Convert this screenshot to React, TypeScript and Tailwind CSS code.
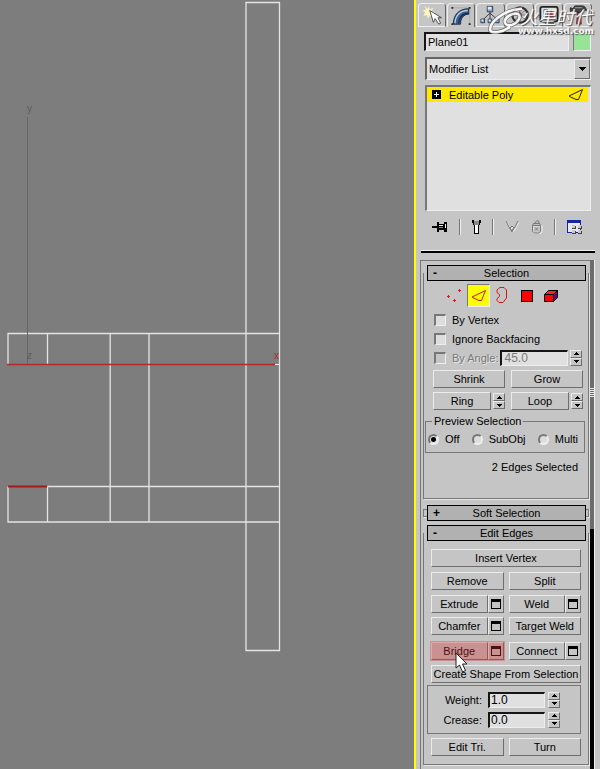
import React from "react";
import clsx from "clsx";

const raised =
  "border border-t-[#ececec] border-l-[#ececec] border-r-[#6e6e6e] border-b-[#6e6e6e] bg-[#c5c5c5]";
const sunken =
  "border-t-2 border-l-2 border-r border-b border-t-[#161616] border-l-[#161616] border-r-[#eeeeee] border-b-[#eeeeee] bg-[#e0e0e0]";
const etched = "border border-[#777777] shadow-[1px_1px_0_#e6e6e6]";

function PushButton({ children, className }: { children: React.ReactNode; className?: string }) {
  return (
    <button
      type="button"
      className={clsx("flex h-[18px] items-center justify-center whitespace-nowrap", raised, className)}
    >
      {children}
    </button>
  );
}

function Spinner({ label }: { label: string }) {
  return (
    <div className="flex h-4 w-3 shrink-0 flex-col">
      <button type="button" aria-label={`${label} up`} className={clsx("flex flex-1 items-center justify-center", raised)}>
        <svg width="5" height="3" viewBox="0 0 5 3" shapeRendering="crispEdges">
          <path d="M2 0h1v1h1v1h1v1H0V2h1V1h1z" />
        </svg>
      </button>
      <button type="button" aria-label={`${label} down`} className={clsx("flex flex-1 items-center justify-center", raised)}>
        <svg width="5" height="3" viewBox="0 0 5 3" shapeRendering="crispEdges">
          <path d="M0 0h5v1H4v1H3v1H2V2H1V1H0z" />
        </svg>
      </button>
    </div>
  );
}

function SettingsButton({ label }: { label: string }) {
  return (
    <button
      type="button"
      aria-label={`${label} settings`}
      className={clsx("flex h-[18px] w-4 shrink-0 items-center justify-center", raised)}
    >
      <svg width="10" height="10" viewBox="0 0 10 10" shapeRendering="crispEdges">
        <path d="M0 0h10v10H0zM1 3v6h8V3z" fillRule="evenodd" />
      </svg>
    </button>
  );
}

function SplitButton({ label }: { label: string }) {
  return (
    <div className="flex flex-1">
      <PushButton className="flex-1">{label}</PushButton>
      <SettingsButton label={label} />
    </div>
  );
}

function CheckRow({ id, label, disabled }: { id: string; label: string; disabled?: boolean }) {
  return (
    <div className="flex items-center gap-1.5">
      <input
        id={id}
        type="checkbox"
        disabled={disabled}
        className={clsx(
          "size-3 appearance-none border-t-2 border-l-2 border-r border-b border-t-[#777777] border-l-[#777777] border-r-[#eeeeee] border-b-[#eeeeee]",
          disabled ? "bg-[#c5c5c5]" : "bg-[#dddddd]"
        )}
      />
      <label
        htmlFor={id}
        className={clsx("whitespace-nowrap", disabled && "text-[#7a7a7a] [text-shadow:1px_1px_0_#e4e4e4]")}
      >
        {label}
      </label>
    </div>
  );
}

function PreviewRadio({ id, label, checked }: { id: string; label: string; checked?: boolean }) {
  return (
    <div className="flex items-center gap-1.5">
      <input
        id={id}
        type="radio"
        name="preview"
        defaultChecked={checked}
        className="size-[11px] appearance-none rounded-full border-2 border-t-[#777777] border-l-[#777777] border-r-[#eeeeee] border-b-[#eeeeee] bg-[#dddddd] checked:bg-[radial-gradient(circle,#000_0_2px,#ddd_3px)]"
      />
      <label htmlFor={id}>{label}</label>
    </div>
  );
}

function RollupHeader({ sign, title }: { sign: string; title: string }) {
  return (
    <button
      type="button"
      className="relative mr-[3px] ml-1 flex h-4 items-center justify-center border border-black bg-[#b1b1b1]"
    >
      <span className="absolute left-[5px] text-xs font-bold">{sign}</span>
      {title}
    </button>
  );
}

function Viewport() {
  return (
    <main className="min-w-0 flex-1 overflow-hidden border-r-2 border-[#ffff00] bg-[#7d7d7d]">
      <svg width="414" height="769" viewBox="0 0 414 769" aria-label="Viewport" className="block max-w-none">
        <g fill="none" stroke="#e4e4e4" strokeWidth="1.3">
          <path d="M246 2.5H279.500V650.500H246z" />
          <path d="M279.500 333.500H8V364.500M47.500 333.500V364.500" />
          <path d="M110.200 333.500V522M149 333.500V522" />
          <path d="M47.500 486.500H279.500M8 486.500V522H279.500M47.500 486.500V522" />
        </g>
        <path d="M275 364.500h4" stroke="#fff" />
        <path d="M27.500 117V364" stroke="#666" />
        <path d="M7 364.500H275" stroke="#b22a2a" strokeWidth="1.400" />
        <path d="M8 486.500H47" stroke="#a81818" strokeWidth="2" />
        <g fontFamily="Liberation Sans" fontSize="10">
          <text x="27" y="112" fill="#5c5c5c">y</text>
          <text x="27" y="359" fill="#5c5c5c">z</text>
          <text x="274" y="359" fill="#b22a2a">x</text>
        </g>
      </svg>
    </main>
  );
}

const tabs = [
  {
    name: "Create",
    icon: (
      <>
        <path d="M7 1l1 4 4-2-2 4 4 1-4 2 2 4-4-2-2 3-1-4-4 1 2-4-3-2 4-1-2-4 4 3z" fill="#fff3c4" />
        <path d="M8 6l4 13 2-4 4 6 2-1-3-6h4z" fill="#fff" stroke="#444" />
      </>
    ),
  },
  {
    name: "Modify",
    icon: (
      <>
        <path d="M1 2h19v18" fill="none" stroke="#999" strokeWidth=".5" />
        <path d="M2 20C2 10 8 3 19 3v6c-6 0-9 5-9 11z" fill="#3d5e8f" stroke="#16253d" />
        <path d="M4 19C4 11 9 5 18 5" fill="none" stroke="#b4cdea" strokeWidth="1.500" />
        <path d="M8 19c0-6 4-11 11-11" fill="none" stroke="#1b2e4c" strokeWidth="1.500" />
        <path d="M0 1h2v2H0zM19 1h2v2h-2zM19 19h2v2h-2zM0 19h2v2H0z" fill="#222" />
      </>
    ),
  },
  {
    name: "Hierarchy",
    icon: (
      <>
        <path d="M10.500 7v9M10.500 9L3 16M10.500 9l8 7" fill="none" stroke="#333" />
        <path d="M7.500 1.500h6v6h-6zM.500 15.500h4v4h-4zM8.500 15.500h4v4h-4zM16.500 15.500h4v4h-4z" fill="#86a4cc" stroke="#253650" />
        <path d="M8 2h4v3H8zM1 16h2v2H1zM9 16h2v2H9z" fill="#dde8f5" />
      </>
    ),
  },
  {
    name: "Motion",
    icon: (
      <>
        <circle cx="10.500" cy="11" r="8.500" fill="#c4c4c4" stroke="#303030" strokeWidth="2.500" />
        <path d="M10.500 3v16M3 11h15M5 6l11 10M5 16L16 6" stroke="#777" />
        <path d="M10 5l2 8-3 0z" fill="#b82020" />
        <circle cx="10.500" cy="11" r="2" fill="#333" />
      </>
    ),
  },
  {
    name: "Display",
    icon: (
      <>
        <rect x="1" y="2" width="19" height="16" rx="2" fill="#dedede" stroke="#222" strokeWidth="2" />
        <path d="M5 5h4v8H5z" fill="#fff" stroke="#375ca6" />
        <path d="M10 14l3-9 3 9z" fill="#d51f3e" />
        <path d="M6 20h10" stroke="#333" strokeWidth="2" />
      </>
    ),
  },
  {
    name: "Utilities",
    icon: (
      <>
        <path d="M10 8h3l1 13H9z" fill="#b0493c" stroke="#522" />
        <path d="M2 3l3 1 2-3h8c3 0 4 2 5 5l-5-1-1 3H9L7 6 2 7z" fill="#454545" stroke="#222" />
        <path d="M7 3h8" stroke="#aaa" />
      </>
    ),
  },
];

const swirl = "M34 3C22 2 3 13 2 23c0 6 13 3 20-2M17 17c-2-5 8-11 13-9 4 2 0 9-6 11-4 1-6 0-7-2z";

function CommandTabs() {
  return (
    <div className="relative mr-2 ml-0.5 pt-[3px]">
      <nav className="flex h-6 gap-px">
        {tabs.map((tab, i) => (
          <button
            key={tab.name}
            type="button"
            aria-label={tab.name}
            className={clsx(
              "flex flex-1 items-center justify-center rounded-t-sm border-t border-r border-l border-t-[#eeeeee] border-r-[#666666] border-l-[#eeeeee]",
              i !== 1 && "border-b border-b-[#eeeeee]"
            )}
          >
            <svg width="20" height="20" viewBox="0 0 21 22">
              {tab.icon}
            </svg>
          </button>
        ))}
      </nav>
      <div className="pointer-events-none absolute top-1.5 -right-2 flex w-28 flex-col items-end text-white opacity-90">
        <svg width="38" height="28" viewBox="0 0 38 28" fill="none" className="absolute top-0 left-0">
          <path d={swirl} stroke="#666" strokeWidth="4" />
          <path d={swirl} stroke="#fff" strokeWidth="2.500" />
        </svg>
        <span className="pr-2 font-['Noto_Sans_CJK_SC',sans-serif] text-[18px] leading-5 italic [text-shadow:1px_1px_1px_#444]">
          火星时代
        </span>
        <span className="pr-1.5 font-['DejaVu_Sans',sans-serif] text-[9px] leading-[10px] font-bold [text-shadow:1px_1px_1px_#555]">
          www.hxsd.com
        </span>
      </div>
    </div>
  );
}

function EdgeIcon({ color }: { color: string }) {
  return (
    <svg width="16" height="13" viewBox="0 0 16 13" fill="none" stroke={color}>
      <path d="M1 8L14.500 1.500L10.500 11.500L8 11.500L1.500 8.500z" />
    </svg>
  );
}

function ModifierStack() {
  return (
    <section className="pt-[5px] pr-[9px] pl-2">
      <div className="flex gap-1">
        <input aria-label="Object name" defaultValue="Plane01" className={clsx("h-[19px] min-w-0 flex-1 pl-0.5", sunken)} />
        <button
          type="button"
          aria-label="Object color"
          className="h-[19px] w-[18px] border border-t-[#777777] border-r-[#eeeeee] border-b-[#eeeeee] border-l-[#777777] bg-[#98e398]"
        />
      </div>
      <div className="relative mt-1.5 ml-px">
        <select
          aria-label="Modifier List"
          className="block h-[23px] w-full appearance-none border-t-2 border-r border-b border-l-2 border-t-[#666666] border-r-[#eeeeee] border-b-[#eeeeee] border-l-[#666666] bg-[#e0e0e0] pl-0.5"
        >
          <option>Modifier List</option>
        </select>
        <span
          className={clsx("pointer-events-none absolute top-0.5 right-px flex h-5 w-4 items-center justify-center", raised)}
        >
          <svg width="7" height="4" viewBox="0 0 7 4" shapeRendering="crispEdges">
            <path d="M0 0h7v1H6v1H5v1H4v1H3V3H2V2H1V1H0z" />
          </svg>
        </span>
      </div>
      <div className="mt-[5px] ml-px h-[126px] border-t-2 border-r border-b border-l-2 border-t-[#777777] border-r-[#eeeeee] border-b-[#eeeeee] border-l-[#777777] bg-[#e0e0e0]">
        <div className="mr-0.5 flex h-[15px] items-center bg-[#ffe800] pr-1 pl-[5px]">
          <svg width="9" height="9" viewBox="0 0 9 9" shapeRendering="crispEdges">
            <path d="M0 0h9v9H0z" />
            <path d="M4 2h1v2h2v1H5v2H4V5H2V4h2z" fill="#fff" />
          </svg>
          <span className="flex-1 pl-2">Editable Poly</span>
          <EdgeIcon color="#222" />
        </div>
      </div>
    </section>
  );
}

function Divider() {
  return <span className="h-4 w-0.5 border-r border-l border-r-[#eeeeee] border-l-[#777777]" />;
}

function StackTools() {
  return (
    <div className="mt-2 flex h-4 items-center gap-[11px] pl-4">
      <button type="button" aria-label="Pin stack">
        <svg width="16" height="12" viewBox="0 0 16 12" shapeRendering="crispEdges">
          <path d="M0 5h5v2H0zM5 1h2v2h5V1h3v10h-3V9H7v2H5z" />
          <path d="M7 4h4v1H7zM13 3h1v4h-1z" fill="#eee" />
          <path d="M7 6h4v1H7z" fill="#888" />
        </svg>
      </button>
      <Divider />
      <button type="button" aria-label="Show end result">
        <svg width="9" height="14" viewBox="0 0 9 14" shapeRendering="crispEdges">
          <path d="M0 0h2v1h5V0h2v3H8v2H7v9H2V5H1V3H0z" />
          <path d="M2 1h5v4H2z" fill="#888" />
          <path d="M3 5h3v8H3z" fill="#fff" />
        </svg>
      </button>
      <Divider />
      <button type="button" aria-label="Make unique">
        <svg width="15" height="14" viewBox="0 0 15 14" fill="none">
          <path d="M2 2l3 6 3 4 3-4 3-6M6 9l2-2 2 2-2 3z" stroke="#eee" />
          <path d="M1 1l3 6 3 4 3-4 3-6M5 8l2-2 2 2-2 4z" stroke="#777" />
        </svg>
      </button>
      <button type="button" aria-label="Remove modifier">
        <svg width="12" height="14" viewBox="0 0 12 14" fill="none">
          <path d="M2 6h9v6l-2 2H4l-2-2z" stroke="#eee" />
          <path d="M1.500 5.500h8v6l-2 1.500h-4l-2-1.500zM1.500 5.500l1-2h6l1 2M4 3l2-2.500 2 1V4M4 7.500l3 3M7 7.500l-3 3" stroke="#777" />
        </svg>
      </button>
      <Divider />
      <button type="button" aria-label="Configure modifier sets">
        <svg width="16" height="15" viewBox="0 0 16 15" shapeRendering="crispEdges">
          <path d="M0 0h14v13H0z" fill="#1624a0" />
          <path d="M1 3h12v9H1z" fill="#e8e8e8" />
          <path d="M5 6h4v3H5zM11 6h4v3h-4zM5 11h4v3H5zM11 11h4v3h-4z" fill="#444" />
          <path d="M5 5h3v3H5zM11 5h3v3h-3zM5 10h3v3H5zM11 10h3v3h-3z" fill="#ccc" />
        </svg>
      </button>
    </div>
  );
}

function SubObjectBar() {
  return (
    <div className="flex h-[23px] items-center pl-[23px]">
      <button type="button" aria-label="Vertex" className="flex w-5 shrink-0">
        <svg width="15" height="14" viewBox="0 0 15 14" stroke="#dc1818" fill="none" shapeRendering="crispEdges">
          <path d="M0 7.500h3M1.500 6v3M6 11.500h3M7.500 10v3M11 1.500h3M12.500 0v3" />
        </svg>
      </button>
      <button
        type="button"
        aria-label="Edge"
        className="flex h-[23px] w-[23px] shrink-0 items-center justify-center border border-t-[#777777] border-r-[#eeeeee] border-b-[#eeeeee] border-l-[#777777] bg-[#ffff00]"
      >
        <EdgeIcon color="#c01818" />
      </button>
      <button type="button" aria-label="Border" className="ml-1.5">
        <svg width="12" height="17" viewBox="0 0 12 17" fill="none" stroke="#d01818">
          <path d="M2.500 1.500L4 .500H8L10.500 3V11L7 15.500H3L1 13.500V11.500L3.500 9.500V7.500L1 5.500V3z" />
        </svg>
      </button>
      <button type="button" aria-label="Polygon" className="ml-[13px] size-3 border border-black bg-[#ff0000]" />
      <button type="button" aria-label="Element" className="ml-[11px]">
        <svg width="14" height="12" viewBox="0 0 14 12" stroke="#000">
          <path d="M.500 4.500L4.500.500H13.500L9.500 4.500z" fill="#ff2020" />
          <path d="M9.500 4.500L13.500.500V7.500L9.500 11.500z" fill="#700870" />
          <path d="M.500 4.500h9v7h-9z" fill="#f00" />
        </svg>
      </button>
    </div>
  );
}

function SelectionRollup() {
  return (
    <section className="flex flex-col">
      <RollupHeader sign="-" title="Selection" />
      <div className={clsx("-mt-2 h-[226px] border-t-0 pt-[11px]", etched)}>
        <SubObjectBar />
        <div className="mt-[3px] flex flex-col pl-2.5">
          <div className="flex h-[19px] items-center">
            <CheckRow id="by-vertex" label="By Vertex" />
          </div>
          <div className="flex h-[19px] items-center">
            <CheckRow id="backfacing" label="Ignore Backfacing" />
          </div>
          <div className="flex h-[19px] items-center">
            <CheckRow id="by-angle" label="By Angle:" disabled />
            <input
              aria-label="Angle"
              disabled
              defaultValue="45.0"
              className={clsx("ml-0.5 h-4 w-[68px] pl-0.5 text-xs text-[#7a7a7a]", sunken)}
            />
            <span className="ml-0.5">
              <Spinner label="Angle" />
            </span>
          </div>
        </div>
        <div className="mt-[3px] mr-[5px] ml-[9px] grid grid-cols-2 gap-x-1.5 gap-y-1">
          <PushButton>Shrink</PushButton>
          <PushButton>Grow</PushButton>
          <div className="flex items-center gap-0.5">
            <PushButton className="flex-1">Ring</PushButton>
            <Spinner label="Ring" />
          </div>
          <div className="flex items-center gap-0.5">
            <PushButton className="flex-1">Loop</PushButton>
            <Spinner label="Loop" />
          </div>
        </div>
        <fieldset className="mt-[5px] mr-[3px] ml-px h-[38px] border border-[#777777] pr-1.5 pl-0.5">
          <legend className="ml-1 px-0.5 leading-3">Preview Selection</legend>
          <div className="flex h-6 items-center justify-between">
            <PreviewRadio id="off" label="Off" checked />
            <PreviewRadio id="subobj" label="SubObj" />
            <PreviewRadio id="multi" label="Multi" />
          </div>
        </fieldset>
        <p className="mt-[7px] pr-2.5 text-right">2 Edges Selected</p>
      </div>
    </section>
  );
}

function SoftSelectionRollup() {
  return (
    <section className="mt-1.5 flex flex-col">
      <RollupHeader sign="+" title="Soft Selection" />
      <div className={clsx("-mt-3 mb-1 h-2", etched)} />
    </section>
  );
}

function EditEdgesRollup() {
  return (
    <section className="mt-1 flex flex-col">
      <RollupHeader sign="-" title="Edit Edges" />
      <div className={clsx("-mt-2 border-t-0 px-[7px] pt-4 pb-2", etched)}>
        <PushButton className="w-full">Insert Vertex</PushButton>
        <div className="mt-[5px] grid grid-cols-2 gap-[5px]">
          <PushButton>Remove</PushButton>
          <PushButton>Split</PushButton>
          <SplitButton label="Extrude" />
          <SplitButton label="Weld" />
        </div>
        <div className="mt-1 grid grid-cols-2 gap-x-[5px] gap-y-[7px]">
          <SplitButton label="Chamfer" />
          <PushButton>Target Weld</PushButton>
          <div className="relative flex">
            <SplitButton label="Bridge" />
            <span className="pointer-events-none absolute -inset-px bg-[#d03030]/35" />
            <svg
              width="13"
              height="21"
              viewBox="0 0 13 21"
              className="pointer-events-none absolute top-2.5 left-6 z-10"
            >
              <path d="M1 1v15l3.500-3 3 7 3-1.500-3-6.500H12z" fill="#fff" stroke="#222" />
            </svg>
          </div>
          <SplitButton label="Connect" />
        </div>
        <PushButton className="mt-[5px] w-full">Create Shape From Selection</PushButton>
        <div className="mt-0.5 -ml-1 flex h-[49px] flex-col justify-center gap-1 border border-[#777777] pr-5">
          {[
            ["Weight", "1.0"],
            ["Crease", "0.0"],
          ].map(([name, value]) => (
            <div key={name} className="flex h-4 items-center justify-end">
              <label htmlFor={name} className="pr-1.5">
                {name}:
              </label>
              <input id={name} defaultValue={value} className={clsx("h-4 w-[57px] pl-px text-xs", sunken)} />
              <span className="ml-[3px]">
                <Spinner label={name} />
              </span>
            </div>
          ))}
        </div>
        <div className="mt-1 grid grid-cols-2 gap-[5px]">
          <PushButton>Edit Tri.</PushButton>
          <PushButton>Turn</PushButton>
        </div>
      </div>
    </section>
  );
}

function CommandPanel() {
  return (
    <aside className="flex w-[184px] shrink-0 flex-col bg-[#c5c5c5]">
      <CommandTabs />
      <ModifierStack />
      <StackTools />
      <div className="mt-[15px] mr-[5px] ml-[5px] h-[3px] border-t border-b-2 border-t-[#eeeeee] border-b-black" />
      <div className="mt-[7px] mr-[5px] ml-1 flex flex-1">
        <div className="flex-1 border-t border-l border-[#777777] pt-1 pr-px pl-0.5">
          <SelectionRollup />
          <SoftSelectionRollup />
          <EditEdgesRollup />
        </div>
        <div className="flex w-[5px] flex-col border-r border-[#eeeeee] bg-black">
          <div className="h-[269px] bg-[#6c6c6c] pt-32">
            <div className="h-2.5 bg-[repeating-linear-gradient(#e8e8e8_0_1px,#6c6c6c_1px_2px)]" />
          </div>
        </div>
      </div>
    </aside>
  );
}

export default function App() {
  return (
    <div className="flex min-h-screen font-['Liberation_Sans',Arial,sans-serif] text-[11px] leading-[14px] text-black">
      <Viewport />
      <CommandPanel />
    </div>
  );
}
